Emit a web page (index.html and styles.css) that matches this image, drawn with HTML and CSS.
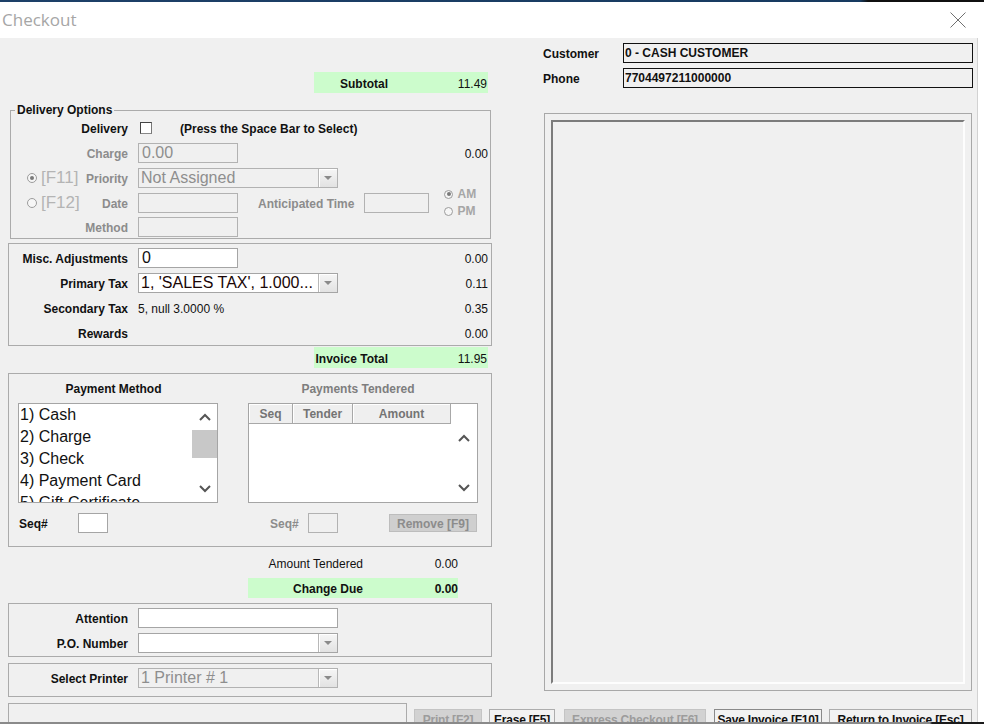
FILE: index.html
```html
<!DOCTYPE html>
<html>
<head>
<meta charset="utf-8">
<title>Checkout</title>
<link rel="stylesheet" href="styles.css">
</head>
<body>
<div class="topstrip"></div>
<div class="titlebar">
  <span class="title">Checkout</span>
  <svg class="close" width="16" height="16" viewBox="0 0 16 16"><path d="M0.5 0.5L15.5 15.5M15.5 0.5L0.5 15.5" stroke="#707070" stroke-width="1" fill="none"/></svg>
</div>
<div class="main">
  <div class="content">
    <div class="left">
      <div class="sumrow top"><div class="green"><span class="gl">Subtotal</span><span class="gv">11.49</span></div></div>

      <fieldset class="grp delivery">
        <legend>Delivery Options</legend>
        <div class="row"><div class="lc"><span class="lbl">Delivery</span></div><span class="chk"></span><span class="hint">(Press the Space Bar to Select)</span></div>
        <div class="row"><div class="lc"><span class="lbl dim">Charge</span></div><div class="inp dis w100">0.00</div><span class="val">0.00</span></div>
        <div class="row"><div class="lc"><span class="fk"><span class="radio on"></span>[F11]</span><span class="lbl dim">Priority</span></div><div class="sel dis w200"><span class="stext">Not Assigned</span><span class="arrow"><i></i></span></div></div>
        <div class="row"><div class="lc"><span class="fk"><span class="radio"></span>[F12]</span><span class="lbl dim">Date</span></div><div class="inp dis w100"></div><span class="lbl dim at">Anticipated Time</span><div class="inp dis w65"></div>
          <div class="ampm"><span class="ap"><span class="radio sm on"></span>AM</span><span class="ap"><span class="radio sm"></span>PM</span></div>
        </div>
        <div class="row last"><div class="lc"><span class="lbl dim">Method</span></div><div class="inp dis w100"></div></div>
      </fieldset>

      <div class="grp misc">
        <div class="row"><div class="lc"><span class="lbl">Misc. Adjustments</span></div><div class="inp w100">0</div><span class="val">0.00</span></div>
        <div class="row"><div class="lc"><span class="lbl">Primary Tax</span></div><div class="sel w200"><span class="stext dark">1, 'SALES TAX', 1.000...</span><span class="arrow"><i></i></span></div><span class="val">0.11</span></div>
        <div class="row"><div class="lc"><span class="lbl">Secondary Tax</span></div><span class="plain">5, null 3.0000 %</span><span class="val">0.35</span></div>
        <div class="row"><div class="lc"><span class="lbl">Rewards</span></div><span class="val">0.00</span></div>
      </div>

      <div class="sumrow inv"><div class="green"><span class="gl">Invoice Total</span><span class="gv">11.95</span></div></div>

      <div class="grp pay">
        <div class="pcol pa">
          <div class="phead">Payment Method</div>
          <div class="list">
            <div class="items">
              <div class="it">1) Cash</div>
              <div class="it">2) Charge</div>
              <div class="it">3) Check</div>
              <div class="it">4) Payment Card</div>
              <div class="it">5) Gift Certificate</div>
            </div>
            <div class="sb">
              <div class="ab"><svg width="12" height="8" viewBox="0 0 12 8"><path d="M1 7L6 2L11 7" fill="none" stroke="#555" stroke-width="2"/></svg></div>
              <div class="thumb"></div>
              <div class="sp"></div>
              <div class="ab"><svg width="12" height="8" viewBox="0 0 12 8"><path d="M1 1L6 6L11 1" fill="none" stroke="#555" stroke-width="2"/></svg></div>
            </div>
          </div>
          <div class="seqrow"><span class="lbl seqa">Seq#</span><div class="inp w30"></div></div>
        </div>
        <div class="pcol pb">
          <div class="phead dim">Payments Tendered</div>
          <div class="tbl">
            <div class="tmain">
              <div class="thead"><span class="th c1">Seq</span><span class="th c2">Tender</span><span class="th c3">Amount</span></div>
            </div>
            <div class="sb2">
              <div class="sp27"></div>
              <div class="ab2"><svg width="12" height="8" viewBox="0 0 12 8"><path d="M1 7L6 2L11 7" fill="none" stroke="#555" stroke-width="2"/></svg></div>
              <div class="sp"></div>
              <div class="ab2"><svg width="12" height="8" viewBox="0 0 12 8"><path d="M1 1L6 6L11 1" fill="none" stroke="#555" stroke-width="2"/></svg></div>
              <div class="sp7"></div>
            </div>
          </div>
          <div class="seqrow"><span class="lbl dim seqb">Seq#</span><div class="inp dis w30"></div><span class="btn rm">Remove [F9]</span></div>
        </div>
      </div>

      <div class="trow amt"><span class="tl">Amount Tendered</span><span class="tv">0.00</span></div>
      <div class="trow chg"><span class="tl">Change Due</span><span class="tv">0.00</span></div>

      <div class="grp att">
        <div class="row"><div class="lc"><span class="lbl">Attention</span></div><div class="inp w200"></div></div>
        <div class="row"><div class="lc"><span class="lbl">P.O. Number</span></div><div class="sel w200"><span class="stext"></span><span class="arrow"><i></i></span></div></div>
      </div>

      <div class="grp prn">
        <div class="row r20"><div class="lc"><span class="lbl">Select Printer</span></div><div class="sel dis w200"><span class="stext">1 Printer # 1</span><span class="arrow"><i></i></span></div></div>
      </div>
    </div>

    <div class="right">
      <div class="info"><span class="ilbl">Customer</span><div class="ibox">0 - CASH CUSTOMER</div></div>
      <div class="info"><span class="ilbl">Phone</span><div class="ibox">7704497211000000</div></div>
      <div class="panel"><div class="panel-in"></div></div>
    </div>
  </div>

  <div class="footer">
    <div class="bbox"></div>
    <span class="fbtn off print">Print [F2]</span>
    <span class="fbtn erase">Erase [F5]</span>
    <span class="fbtn off express">Express Checkout [F6]</span>
    <span class="fbtn save">Save Invoice [F10]</span>
    <span class="fbtn ret">Return to Invoice [Esc]</span>
  </div>
</div>
<div class="bottomstrip"></div>
</body>
</html>
```
FILE: styles.css
```css
* { box-sizing: border-box; margin: 0; padding: 0; }
html, body { width: 984px; height: 724px; overflow: hidden; }
body { background: #fff; font-family: "Liberation Sans", Arial, sans-serif; font-size: 12px; line-height: 14px; color: #111; }

.topstrip { height: 2px; background: linear-gradient(to right, #1d4068 0, #173a60 860px, #101010 868px); }
.titlebar { height: 36px; display: flex; align-items: center; justify-content: space-between; background: #fff; }
.title { margin-left: 2px; font-family: "Open Sans", "Noto Sans", sans-serif; font-size: 17px; line-height: 24px; color: #a6a6a6; }
.close { display: block; margin-right: 18px; }

.main { width: 978px; height: 684px; background: #f0f0f0; border-right: 1px solid #d2d2d2; overflow: hidden; }
.bottomstrip { height: 2px; background: linear-gradient(to right, #8a8a8a 0, #8a8a8a 930px, #1a1a1a 932px); }

.content { display: flex; height: 665px; padding-left: 8px; }
.left { width: 484px; flex: none; }
.right { width: 430px; flex: none; margin-left: 51px; padding-top: 5px; }

/* summary green bars */
.sumrow { display: flex; justify-content: flex-end; padding-right: 4px; }
.sumrow.top { margin-top: 34px; }
.sumrow.inv { margin-top: 1px; }
.green { width: 174px; height: 21px; background: #ccfccc; display: flex; align-items: center; }
.gl { width: 74px; text-align: right; font-weight: bold; padding-top: 2px; }
.gv { width: 100px; text-align: right; padding-right: 1px; padding-top: 2px; }

/* groups */
.grp { border: 1px solid #ababab; }
fieldset.grp { margin: 12px 1px 0 2px; min-width: 0; }
legend { margin-left: 4px; padding: 0 2px; font-weight: bold; font-size: 12px; line-height: 10px; color: #111; }
.misc { margin-top: 4px; padding-top: 1px; }
.pay { margin-top: 5px; display: flex; height: 174px; padding-top: 8px; }
.att { margin-top: 5px; padding: 1px 0; }
.prn { margin-top: 6px; padding: 4px 0 8px; }

.row { display: flex; align-items: center; height: 25px; }
.row.last { height: 23px; }
.row.r20 { height: 20px; }
.lc { width: 119px; flex: none; display: flex; align-items: center; }
.delivery .lc { width: 117px; }
.lbl { margin-left: auto; font-weight: bold; color: #111; white-space: nowrap; padding-top: 2px; }
.dim { color: #8c8c8c; }
.val { margin-left: auto; padding-right: 3px; padding-top: 2px; }
.delivery .val { padding-right: 2px; }
.plain { margin-left: 10px; padding-top: 2px; }
.hint { margin-left: 28px; font-weight: bold; padding-top: 2px; }

.fk { display: flex; align-items: center; margin-left: 16px; font-size: 17px; line-height: 20px; color: #b4b4b4; }
.radio { display: inline-block; width: 10px; height: 10px; border-radius: 50%; border: 1px solid #9c9c9c; background: #f6f6f6; margin-right: 4px; position: relative; }
.radio.on::after { content: ""; position: absolute; left: 2px; top: 2px; width: 4px; height: 4px; border-radius: 50%; background: #7a7a7a; }
.radio.sm { width: 9px; height: 9px; }
.radio.sm.on::after { left: 1.5px; top: 1.5px; width: 4px; height: 4px; }

.chk { width: 12px; height: 12px; margin-left: 12px; background: #fff; border: 1px solid #444; border-right-color: #777; border-bottom-color: #888; }

.inp { height: 20px; margin-left: 10px; border: 1px solid #a5a5a5; background: #fff; font-size: 16px; line-height: 18px; padding-left: 3px; color: #111; flex: none; }
.inp.dis { background: #f0f0f0; border-color: #b2b2b2; color: #8e8e8e; }
.w100 { width: 100px; }
.w200 { width: 200px; }
.w65 { width: 65px; }
.w30 { width: 30px; }
.at { margin-left: 20px; }

.sel { height: 20px; width: 200px; margin-left: 10px; display: flex; border: 1px solid #a5a5a5; background: #fff; flex: none; }
.sel.dis { background: #f0f0f0; border-color: #b2b2b2; }
.stext { flex: 1; font-size: 16px; line-height: 18px; padding-left: 2px; white-space: nowrap; overflow: hidden; color: #111; }
.stext.dark { color: #1a0606; }
.sel.dis .stext { color: #8e8e8e; }
.arrow { width: 19px; height: 18px; border-left: 1px solid #b8b8b8; background: linear-gradient(#f6f6f6, #e2e2e2); box-shadow: inset 1px 1px #fff; display: flex; align-items: center; justify-content: center; }
.arrow i { display: block; width: 0; height: 0; border-left: 4px solid transparent; border-right: 4px solid transparent; border-top: 4px solid #8a8a8a; }

.ampm { display: flex; flex-direction: column; justify-content: space-between; height: 34px; margin-left: 15px; line-height: 17px; font-weight: bold; color: #a6a6a6; }
.ap { display: flex; align-items: center; }

/* payment */
.pcol { display: flex; flex-direction: column; }
.pa { width: 209px; }
.pb { width: 240px; margin-left: 20px; }
.phead { height: 14px; line-height: 14px; font-weight: bold; text-align: center; }
.phead.dim { color: #7e7e7e; }
.list { margin-top: 7px; margin-left: 9px; width: 200px; height: 100px; border: 1px solid #a5a5a5; background: #fff; display: flex; }
.items { flex: 1; overflow: hidden; padding-left: 1px; }
.it { font-size: 16px; line-height: 22px; height: 22px; white-space: nowrap; color: #111; }
.sb { width: 25px; display: flex; flex-direction: column; }
.ab { height: 26px; display: flex; align-items: center; justify-content: center; }
.ab svg, .ab2 svg { display: block; }
.thumb { height: 28px; background: #c8c8c8; }
.sp { flex: 1; }

.tbl { margin-top: 7px; margin-left: 10px; width: 230px; height: 100px; border: 1px solid #a5a5a5; background: #fff; display: flex; }
.tmain { width: 202px; }
.thead { display: flex; height: 20px; }
.th { height: 20px; line-height: 18px; padding-top: 1px; background: #efefef; border-right: 1px solid #a8a8a8; border-bottom: 1px solid #a8a8a8; box-shadow: inset 1px 1px #fff; text-align: center; font-weight: bold; color: #747474; }
.c1 { width: 44px; }
.c2 { width: 60px; }
.c3 { width: 98px; }
.sb2 { width: 26px; display: flex; flex-direction: column; }
.sp27 { height: 27px; }
.sp7 { height: 7px; }
.ab2 { height: 14px; display: flex; align-items: center; justify-content: center; }

.seqrow { margin-top: 10px; height: 20px; display: flex; align-items: center; }
.seqrow .inp { margin-left: 0; }
.seqa { margin-left: 10px; width: 59px; }
.seqb { margin-left: 32px; width: 38px; }
.btn { display: flex; align-items: center; justify-content: center; font-weight: bold; white-space: nowrap; padding-top: 1px; }
.rm { margin-left: 51px; width: 88px; height: 18px; background: #cfcfcf; border: 1px solid #bdbdbd; color: #8c8c8c; }

/* tendered */
.trow { display: flex; align-items: center; }
.amt { margin-top: 9px; height: 14px; padding-top: 2px; }
.chg { margin-top: 8px; height: 20px; margin-left: 240px; width: 210px; background: #ccfccc; font-weight: bold; padding-top: 2px; }
.amt .tl { width: 355px; text-align: right; }
.chg .tl { width: 115px; text-align: right; }
.tv { width: 95px; text-align: right; }

/* right column */
.info { display: flex; align-items: center; height: 20px; margin-bottom: 5px; }
.ilbl { width: 80px; font-weight: bold; padding-top: 2px; }
.ibox { width: 350px; height: 20px; border: 1px solid #111; padding-left: 1px; padding-top: 1px; line-height: 17px; font-weight: bold; }
.panel { margin-top: 25px; margin-left: 1px; width: 428px; height: 578px; border: 1px solid #a8a8a8; padding: 6px; }
.panel-in { height: 100%; border-style: solid; border-width: 2px; border-color: #7c7c7c #fdfdfd #fdfdfd #7c7c7c; }

/* footer */
.footer { display: flex; padding-left: 8px; }
.bbox { width: 399px; height: 30px; border: 1px solid #ababab; flex: none; }
.fbtn { display: flex; align-items: center; justify-content: center; height: 22px; margin-top: 6px; font-weight: bold; white-space: nowrap; border: 1px solid #adadad; background: #f2f2f2; color: #111; flex: none; letter-spacing: -0.2px; }
.fbtn.off { background: #d2d2d2; color: #9c9c9c; border-color: #c4c4c4; }
.print { width: 68px; margin-left: 7px; border-color: #c6e4c6; }
.erase { width: 66px; margin-left: 7px; }
.express { width: 142px; margin-left: 9px; }
.save { width: 108px; margin-left: 8px; border-color: #8a8a8a; }
.ret { width: 143px; margin-left: 7px; }
```
